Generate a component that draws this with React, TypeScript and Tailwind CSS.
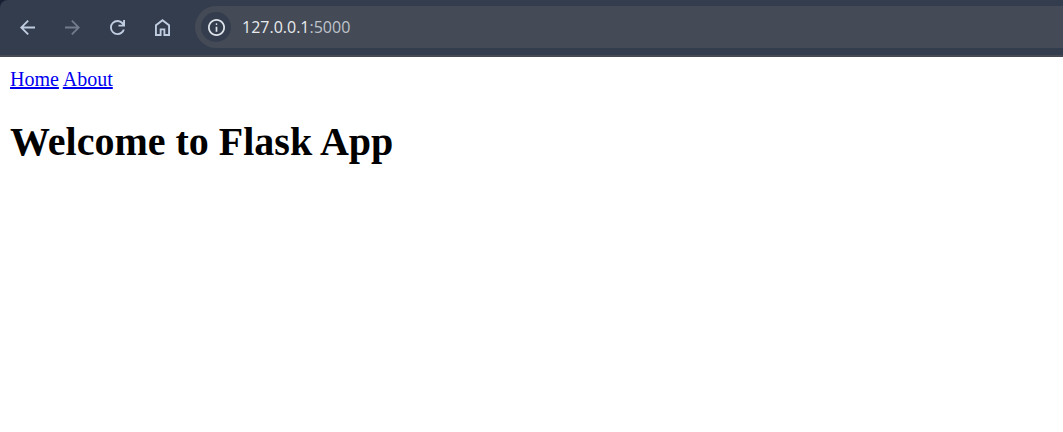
import type { ReactNode } from "react";

function ToolbarButton({ label, disabled, children }: { label: string; disabled?: boolean; children: ReactNode }) {
  return (
    <button
      type="button"
      aria-label={label}
      disabled={disabled}
      className="flex h-[42px] w-[45px] items-center justify-center text-[#c0cce0] disabled:text-[#727b8b]"
    >
      {children}
    </button>
  );
}

function BrowserToolbar() {
  return (
    <header className="bg-[#182033]">
      <div className="flex items-center rounded-tl-[8px] border-b-2 border-[#474a52] bg-[#343d4e] pt-[6px] pb-[7px] pl-[5px]">
        <nav aria-label="Browser" className="flex shrink-0">
          <ToolbarButton label="Back">
            <svg width="15" height="15" viewBox="4 4 16 16" fill="currentColor">
              <path d="M7.83 13l5.6 5.6L12 20l-8-8 8-8 1.43 1.4L7.83 11H20v2z" />
            </svg>
          </ToolbarButton>
          <ToolbarButton label="Forward" disabled>
            <svg width="15" height="15" viewBox="4 4 16 16" fill="currentColor">
              <path d="M16.17 13H4v-2h12.17l-5.6-5.6L12 4l8 8-8 8-1.43-1.4z" />
            </svg>
          </ToolbarButton>
          <ToolbarButton label="Reload">
            <svg width="15" height="15" viewBox="4 4 16 16" fill="currentColor">
              <path d="M12 20q-3.35 0-5.675-2.325T4 12t2.325-5.675T12 4q1.725 0 3.3.713T18 6.75V4h2v7h-7V9h4.2q-.8-1.4-2.187-2.2T12 6Q9.5 6 7.75 7.75T6 12t1.75 4.25T12 18q1.925 0 3.475-1.1T17.65 14h2.1q-.7 2.65-2.85 4.325T12 20z" />
            </svg>
          </ToolbarButton>
          <ToolbarButton label="Home">
            <svg width="15" height="17" viewBox="4 3 16 18" fill="currentColor">
              <path d="M6 19h3v-6h6v6h3v-9l-6-4.5L6 10zm-2 2V9l8-6 8 6v12h-7v-6h-2v6z" />
            </svg>
          </ToolbarButton>
        </nav>
        <div className="ml-[10px] flex h-[42px] min-w-0 flex-1 items-center rounded-l-full bg-[#444a56] pl-[6px] font-['Open_Sans',sans-serif] text-[16px] leading-6">
          <button
            type="button"
            aria-label="View site information"
            className="flex size-[30px] shrink-0 items-center justify-center rounded-full bg-[#343d4e] text-[#dfe3ea]"
          >
            <svg width="17" height="17" viewBox="2 2 20 20" fill="currentColor">
              <path d="M11 17h2v-6h-2zm1-8q.425 0 .713-.288T13 8t-.288-.713T12 7t-.713.288T11 8t.288.713T12 9m0 13q-2.075 0-3.9-.788t-3.175-2.137T2.788 15.9 2 12t.788-3.9 2.137-3.175T8.1 2.788 12 2t3.9.788 3.175 2.137T21.213 8.1 22 12t-.788 3.9-2.137 3.175-3.175 2.138T12 22m0-2q3.35 0 5.675-2.325T20 12t-2.325-5.675T12 4 6.325 6.325 4 12t2.325 5.675T12 20" />
            </svg>
          </button>
          <a href="http://127.0.0.1:5000" aria-label="Address" className="ml-[11px] text-[#e8eaed]">
            127.0.0.1<span className="text-[#bfc4cc]">:5000</span>
          </a>
        </div>
      </div>
    </header>
  );
}

export default function App() {
  return (
    <div className="min-h-screen bg-white font-['Liberation_Serif',serif] text-black">
      <BrowserToolbar />
      <main className="p-[10px]">
        <nav aria-label="Site" className="text-[20px] leading-6 text-[#0000ee]">
          <a href="/" className="underline decoration-2">Home</a>{" "}
          <a href="/about" className="underline decoration-2">About</a>
        </nav>
        <h1 className="mt-7 text-[40px] leading-[46px] font-bold">Welcome to Flask App</h1>
      </main>
    </div>
  );
}
